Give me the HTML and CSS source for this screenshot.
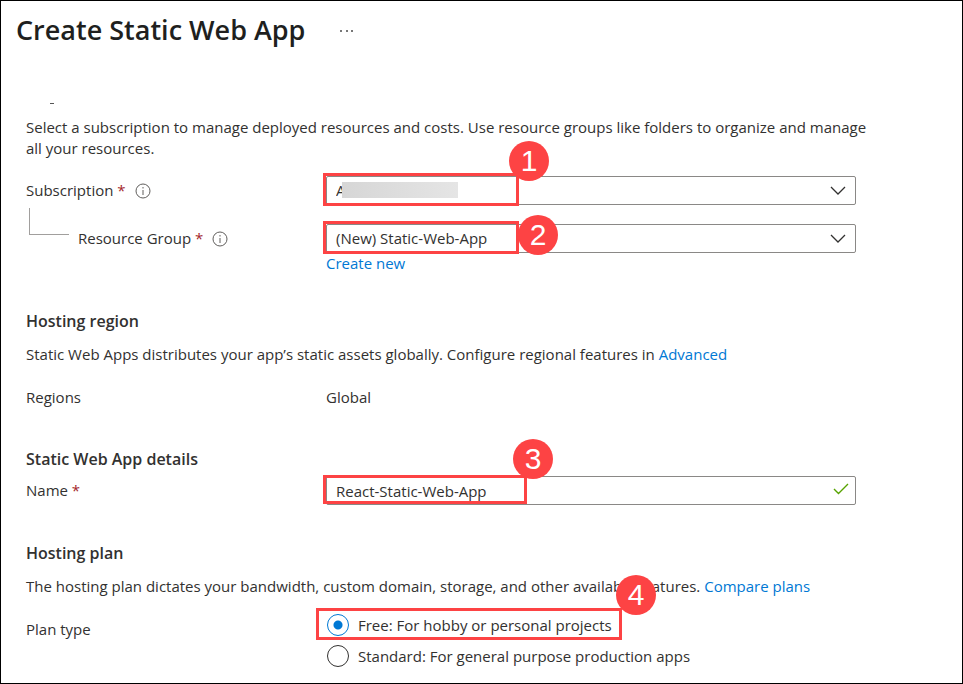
FILE: index.html
```html
<!DOCTYPE html>
<html lang="en">
<head>
<meta charset="utf-8">
<meta name="viewport" content="width=device-width, initial-scale=1">
<title>Create Static Web App</title>
<link rel="stylesheet" href="styles.css">
</head>
<body>
<main class="page">
  <header class="page-header">
    <h1>Create Static Web App</h1>
    <button class="more" type="button" aria-label="More actions">
      <svg width="14" height="4" viewBox="0 0 14 4" fill="#777"><rect x="0" y="2" width="2" height="2"/><rect x="6" y="2" width="2" height="2"/><rect x="11" y="2" width="2" height="2"/></svg>
    </button>
  </header>

  <form class="form">
    <div class="scroll-edge"></div>
    <section class="project">
      <p>Select a subscription to manage deployed resources and costs. Use resource groups like folders to organize and manage all your resources.</p>
      <div class="row">
        <div class="label">
          <label for="subscription">Subscription <span class="required">*</span></label>
          <svg class="info" width="16" height="16" viewBox="0 0 16 16"><circle cx="8" cy="8" r="7" fill="none" stroke="#605e5c"/><path d="M8 7v5M8 4v1.5" stroke="#605e5c"/></svg>
        </div>
        <div class="control">
          <select id="subscription"><option>A</option></select>
          <svg class="chevron" width="16" height="10" viewBox="0 0 16 10"><path d="M1 1l7 7 7-7" fill="none" stroke="#323130" stroke-width="1.3"/></svg>
          <span class="redaction"></span>
          <span class="highlight highlight-select"><b class="step step-1">1</b></span>
        </div>
      </div>
      <div class="row nested">
        <div class="label">
          <span class="branch"></span>
          <label for="group">Resource Group <span class="required">*</span></label>
          <svg class="info" width="16" height="16" viewBox="0 0 16 16"><circle cx="8" cy="8" r="7" fill="none" stroke="#605e5c"/><path d="M8 7v5M8 4v1.5" stroke="#605e5c"/></svg>
        </div>
        <div class="control">
          <select id="group"><option>(New) Static-Web-App</option></select>
          <svg class="chevron" width="16" height="10" viewBox="0 0 16 10"><path d="M1 1l7 7 7-7" fill="none" stroke="#323130" stroke-width="1.3"/></svg>
          <span class="highlight highlight-select"><b class="step step-2">2</b></span>
        </div>
        <a class="create" href="#">Create new</a>
      </div>
    </section>

    <section>
      <h2>Hosting region</h2>
      <p>Static Web Apps distributes your app’s static assets globally. Configure regional features in <a href="#">Advanced</a></p>
      <div class="row">
        <span>Regions</span>
        <span>Global</span>
      </div>
    </section>

    <section class="details">
      <h2>Static Web App details</h2>
      <div class="row">
        <div class="label"><label for="name">Name <span class="required">*</span></label></div>
        <div class="control">
          <input id="name" type="text" value="React-Static-Web-App">
          <svg class="check" width="16" height="12" viewBox="0 0 16 12"><path d="M1 6l4.500 4.500L15 1" fill="none" stroke="#57a300" stroke-width="1.400"/></svg>
          <span class="highlight highlight-name"><b class="step step-3">3</b></span>
        </div>
      </div>
    </section>

    <section class="plan">
      <h2>Hosting plan</h2>
      <p>The hosting plan dictates your bandwidth, custom domain, storage, and other available features. <a href="#">Compare plans</a></p>
      <div class="row" role="radiogroup" aria-labelledby="plan-type">
        <span id="plan-type" class="plan-label">Plan type</span>
        <div class="options">
          <label class="option"><input type="radio" name="plan" checked>Free: For hobby or personal projects<span class="highlight highlight-plan"><b class="step step-4">4</b></span></label>
          <label class="option"><input type="radio" name="plan">Standard: For general purpose production apps</label>
        </div>
      </div>
    </section>
  </form>
</main>
</body>
</html>
```
FILE: styles.css
```css
* { box-sizing: border-box; }

body {
  margin: 0;
  background: #fff;
  color: #323130;
  font: 15px/21px "Open Sans", "Noto Sans", sans-serif;
}

.page {
  min-height: 100vh;
  border: 1px solid #000;
}

.page-header {
  display: flex;
  align-items: center;
  gap: 35px;
  padding: 9px 15px 0;
}

h1 {
  margin: 0;
  color: #201f1e;
  font-size: 27px;
  font-weight: 600;
  line-height: 40px;
}

.more {
  display: flex;
  padding: 0;
  border: 0;
  background: none;
}

.form {
  max-width: 880px;
  padding: 53px 0 0 25px;
}

.scroll-edge {
  width: 4px;
  height: 1px;
  margin: 0 0 13px 24px;
  background: #555;
}

section { margin-bottom: 41px; }
.project { margin-bottom: 37px; }
.plan { margin-bottom: 0; }

h2 {
  margin: 0 0 12px;
  font-size: 16px;
  font-weight: 600;
  line-height: 21px;
}

.details h2 { margin-bottom: 6px; }
.details { margin-bottom: 38px; }

p { margin: 0 0 22px; }
.project p { margin-bottom: 17px; }
.plan p { margin-bottom: 17px; }

a {
  color: #0078d4;
  text-decoration: none;
}

.row {
  display: grid;
  grid-template-columns: 300px 1fr;
  max-width: 830px;
}

.nested { margin-top: 19px; }

.label {
  display: flex;
  align-items: center;
  gap: 9px;
}

.required { color: #a4262c; }

.branch {
  align-self: flex-start;
  width: 40px;
  height: 27px;
  margin: -16px 0 0 3px;
  border: 1px solid #a19f9d;
  border-width: 0 0 1px 1px;
}

.create { grid-column: 2; }

.control {
  position: relative;
  height: 29px;
}

select,
input[type="text"] {
  width: 100%;
  height: 29px;
  padding: 0 40px 0 9px;
  border: 1px solid #8a8886;
  border-radius: 2px;
  background: #fff;
  color: inherit;
  font: inherit;
  appearance: none;
}

.chevron,
.check {
  position: absolute;
  top: 10px;
  right: 10px;
  pointer-events: none;
}

.check {
  top: 7px;
  right: 7px;
}

.redaction {
  position: absolute;
  top: 6px;
  left: 16px;
  width: 116px;
  height: 16px;
  background: linear-gradient(90deg, #d6d6d6, #e5e5e5);
}

.highlight {
  position: absolute;
  border: 3px solid #fd4344;
  pointer-events: none;
}

.highlight-select {
  top: -3px;
  left: -3px;
  width: 196px;
  height: 33px;
}

.highlight-name {
  top: -1px;
  left: -3px;
  width: 204px;
  height: 29px;
}

.highlight-plan {
  top: -6px;
  left: -10px;
  width: 306px;
  height: 32px;
}

.step {
  position: absolute;
  width: 40px;
  height: 40px;
  border-radius: 50%;
  background: #fd4344;
  color: #fff;
  font: 30px/40px "Liberation Sans", sans-serif;
  text-align: center;
}

.step-1 { top: -35px; right: -33px; }
.step-2 { top: -9px; right: -42px; }
.step-3 { top: -39px; right: -29px; }
.step-4 { top: -36px; right: -37px; }

.plan-label { padding-top: 5px; }

.options {
  display: flex;
  flex-direction: column;
  align-items: flex-start;
  gap: 9px;
}

.option {
  position: relative;
  display: flex;
  align-items: center;
  gap: 9px;
  height: 22px;
}

input[type="radio"] {
  width: 22px;
  height: 22px;
  margin: 0 0 0 1px;
  border: 1px solid #323130;
  border-radius: 50%;
  background: #fff;
  appearance: none;
}

input[type="radio"]:checked {
  border-color: #0078d4;
  background: radial-gradient(circle, #0078d4 0 4px, #fff 5px);
}
```
